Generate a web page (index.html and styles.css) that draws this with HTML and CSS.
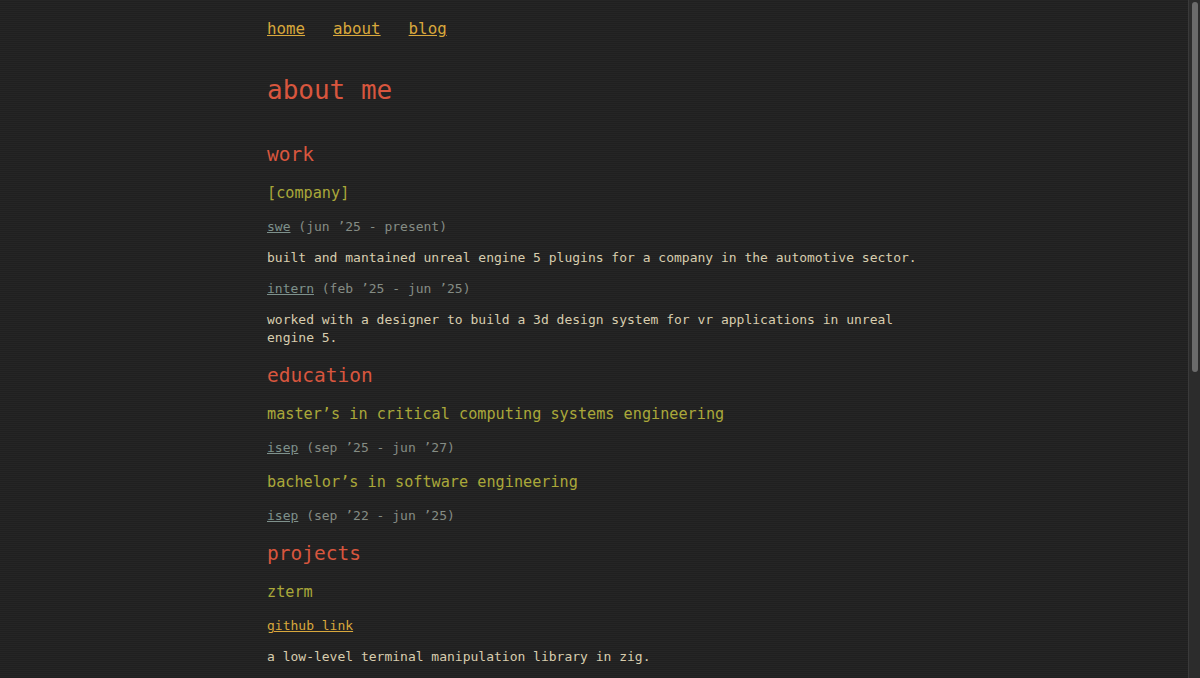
FILE: index.html
```html
<!DOCTYPE html>
<html lang="en">
<head>
<meta charset="utf-8">
<title>about me</title>
<link rel="stylesheet" href="styles.css">
</head>
<body>
<main class="page">
  <nav class="nav">
    <a href="#">home</a>
    <a href="#">about</a>
    <a href="#">blog</a>
  </nav>

  <h1 class="title">about me</h1>

  <h2 class="section">work</h2>
  <h3 class="item">[company]</h3>
  <p class="meta"><a href="#">swe</a> (jun ’25 - present)</p>
  <p class="text">built and mantained unreal engine 5 plugins for a company in the automotive sector.</p>
  <p class="meta"><a href="#">intern</a> (feb ’25 - jun ’25)</p>
  <p class="text">worked with a designer to build a 3d design system for vr applications in unreal engine 5.</p>

  <h2 class="section">education</h2>
  <h3 class="item">master’s in critical computing systems engineering</h3>
  <p class="meta"><a href="#">isep</a> (sep ’25 - jun ’27)</p>
  <h3 class="item">bachelor’s in software engineering</h3>
  <p class="meta"><a href="#">isep</a> (sep ’22 - jun ’25)</p>

  <h2 class="section">projects</h2>
  <h3 class="item">zterm</h3>
  <p class="link"><a href="#">github link</a></p>
  <p class="text">a low-level terminal manipulation library in zig.</p>
</main>
<div class="scrollbar" aria-hidden="true"><div class="scrollbar-thumb"></div></div>
</body>
</html>
```
FILE: styles.css
```css
html {
  color-scheme: dark;
  background: #222222;
}

body {
  margin: 0;
  padding-right: 12px;
  min-height: 1240px;
  background: repeating-linear-gradient(to bottom, #252525 0, #252525 1px, #202020 1px, #202020 2px);
  color: #d8cdae;
  font-family: "DejaVu Sans Mono", "Liberation Mono", monospace;
  font-size: 13px;
  line-height: 18px;
}

.page {
  max-width: 654px;
  margin: 0 auto;
  padding-top: 18px;
}

.nav {
  display: flex;
  gap: 28px;
  font-size: 15.8px;
  line-height: 22px;
}

.nav a {
  color: #d9a83c;
  text-decoration: underline;
}

.title {
  margin: 34px 0 36px;
  font-size: 26px;
  line-height: 32px;
  font-weight: normal;
  color: #d8563e;
}

.section {
  margin: 16px 0;
  font-size: 19.5px;
  line-height: 25px;
  font-weight: normal;
  color: #d8563e;
}

.item {
  margin: 15px 0;
  font-size: 15.2px;
  line-height: 20px;
  font-weight: normal;
  color: #aaa83a;
}

.meta {
  margin: 13px 0;
  color: #858c84;
}

.meta a {
  color: #7e918c;
  text-decoration: underline;
}

.link {
  margin: 13px 0;
}

.link a {
  color: #d9a83c;
  text-decoration: underline;
}

.text {
  margin: 13px 0;
  color: #d8cdae;
}

.scrollbar {
  position: fixed;
  top: 0;
  right: 0;
  bottom: 0;
  width: 11px;
  background: #2c2c2c;
  border-left: 1px solid #3a3a3a;
}

.scrollbar-thumb {
  margin: 2px 0 0 3px;
  width: 6px;
  height: 370px;
  border-radius: 3px;
  background: #6b6b6b;
}
```
